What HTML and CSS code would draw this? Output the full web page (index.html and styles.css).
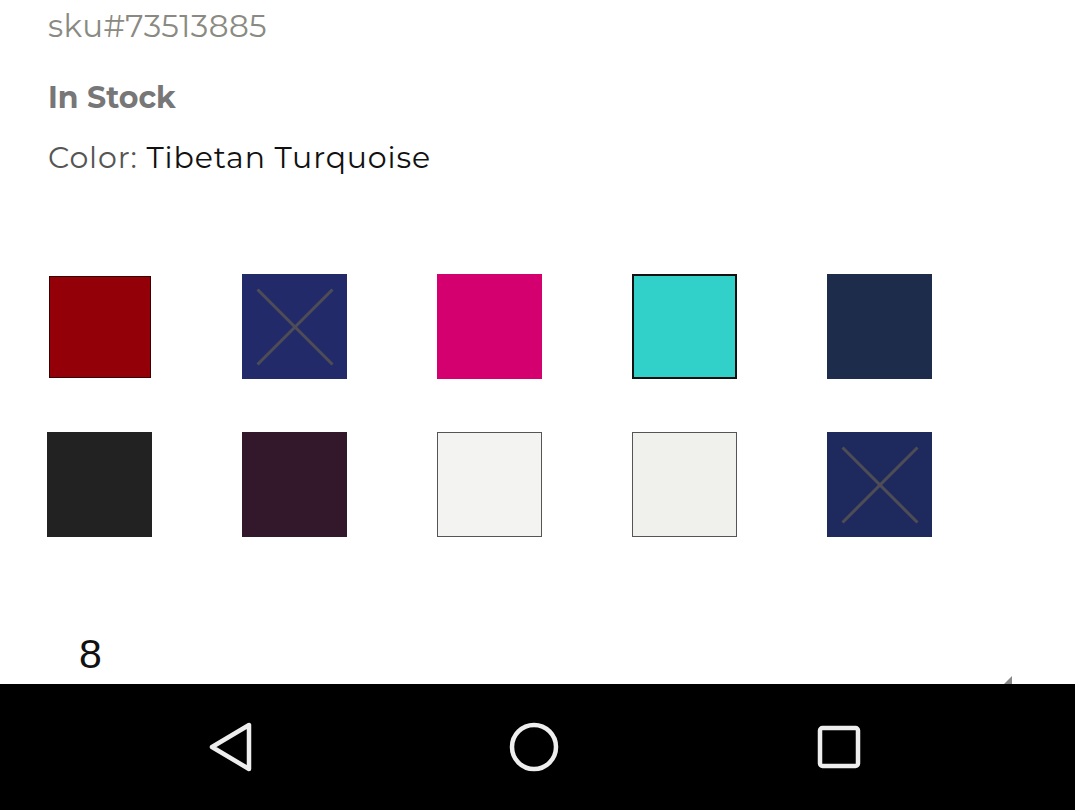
FILE: index.html
```html
<!DOCTYPE html>
<html>
<head>
<meta charset="utf-8">
<link rel="stylesheet" href="styles.css">
</head>
<body>
<div class="screen">
  <main class="content">
    <div class="sku">sku#73513885</div>
    <div class="stock">In Stock</div>
    <div class="color-line"><span class="label">Color:</span> <span class="value">Tibetan Turquoise</span></div>
    <div class="swatches">
      <div class="sw red"></div>
      <div class="sw navy x"></div>
      <div class="sw pink"></div>
      <div class="sw turq selected"></div>
      <div class="sw dnavy"></div>
      <div class="sw black"></div>
      <div class="sw plum"></div>
      <div class="sw white"></div>
      <div class="sw ivory"></div>
      <div class="sw navy2 x"></div>
    </div>
    <div class="qty-row">
      <span class="qty">8</span>
      <span class="corner"></span>
    </div>
  </main>
  <nav class="navbar">
    <svg class="nav-icon" width="60" height="60" viewBox="0 0 60 60"><path d="M50 8 L50 52 L13 30 Z" fill="none" stroke="#eee" stroke-width="4.5" stroke-linejoin="round"/></svg>
    <svg class="nav-icon" width="60" height="60" viewBox="0 0 60 60"><circle cx="30" cy="30" r="22" fill="none" stroke="#eee" stroke-width="4.5"/></svg>
    <svg class="nav-icon" width="60" height="60" viewBox="0 0 60 60"><rect x="11" y="11" width="38" height="38" rx="2.5" fill="none" stroke="#eee" stroke-width="4.5"/></svg>
  </nav>
</div>
</body>
</html>
```
FILE: styles.css
```css
* { box-sizing: border-box; }
html, body { margin: 0; padding: 0; background: #fff; }
.screen { width: 1075px; height: 810px; display: flex; flex-direction: column; overflow: hidden; }
.content { flex: 1; padding: 6px 0 0 48px; font-family: "Montserrat", "Lato", "Noto Sans", sans-serif; position: relative; }
.sku { font-size: 31px; color: #8a8a82; line-height: 40px; letter-spacing: 0.4px; }
.stock { font-size: 30px; font-weight: 700; color: #777; line-height: 40px; margin-top: 32px; }
.color-line { font-size: 30px; line-height: 40px; margin-top: 20px; letter-spacing: 0.85px; }
.label { color: #555; }
.value { color: #111; }
.swatches { display: grid; grid-template-columns: repeat(5, 105px); column-gap: 90px; row-gap: 53px; margin-top: 96px; margin-left: -1px; }
.sw { width: 105px; height: 105px; position: relative; }
.red { background: #940008; border: 1px solid #3a0004; width: 102px; height: 102px; margin: 2px 0 0 2px; }
.navy { background: #232a6a; }
.pink { background: #d5006f; }
.turq { background: #31d0c8; }
.selected { border: 2px solid #111; }
.dnavy { background: #1e2c4c; }
.black { background: #222; }
.plum { background: #33182c; }
.white { background: #f3f3f1; border: 1px solid #555; }
.ivory { background: #f0f0ec; border: 1px solid #555; }
.navy2 { background: #1e2a5e; }
.x::before, .x::after { content: ""; position: absolute; left: 50%; top: 50%; width: 106px; height: 3px; background: #4e4c55; }
.x::before { transform: translate(-50%, -50%) rotate(45deg); }
.x::after { transform: translate(-50%, -50%) rotate(-45deg); }
.qty-row { margin-top: 97px; padding-left: 31px; display: flex; align-items: center; }
.qty { font-family: "Liberation Sans", Arial, sans-serif; font-size: 41px; color: #111; line-height: 40px; }
.corner { position: absolute; right: 63px; bottom: 0; width: 0; height: 0; border-left: 8px solid transparent; border-bottom: 8px solid #888; }
.navbar { height: 126px; background: #000; display: flex; align-items: center; justify-content: flex-start; gap: 245px; padding-left: 199px; }
.nav-icon { display: block; }
```
